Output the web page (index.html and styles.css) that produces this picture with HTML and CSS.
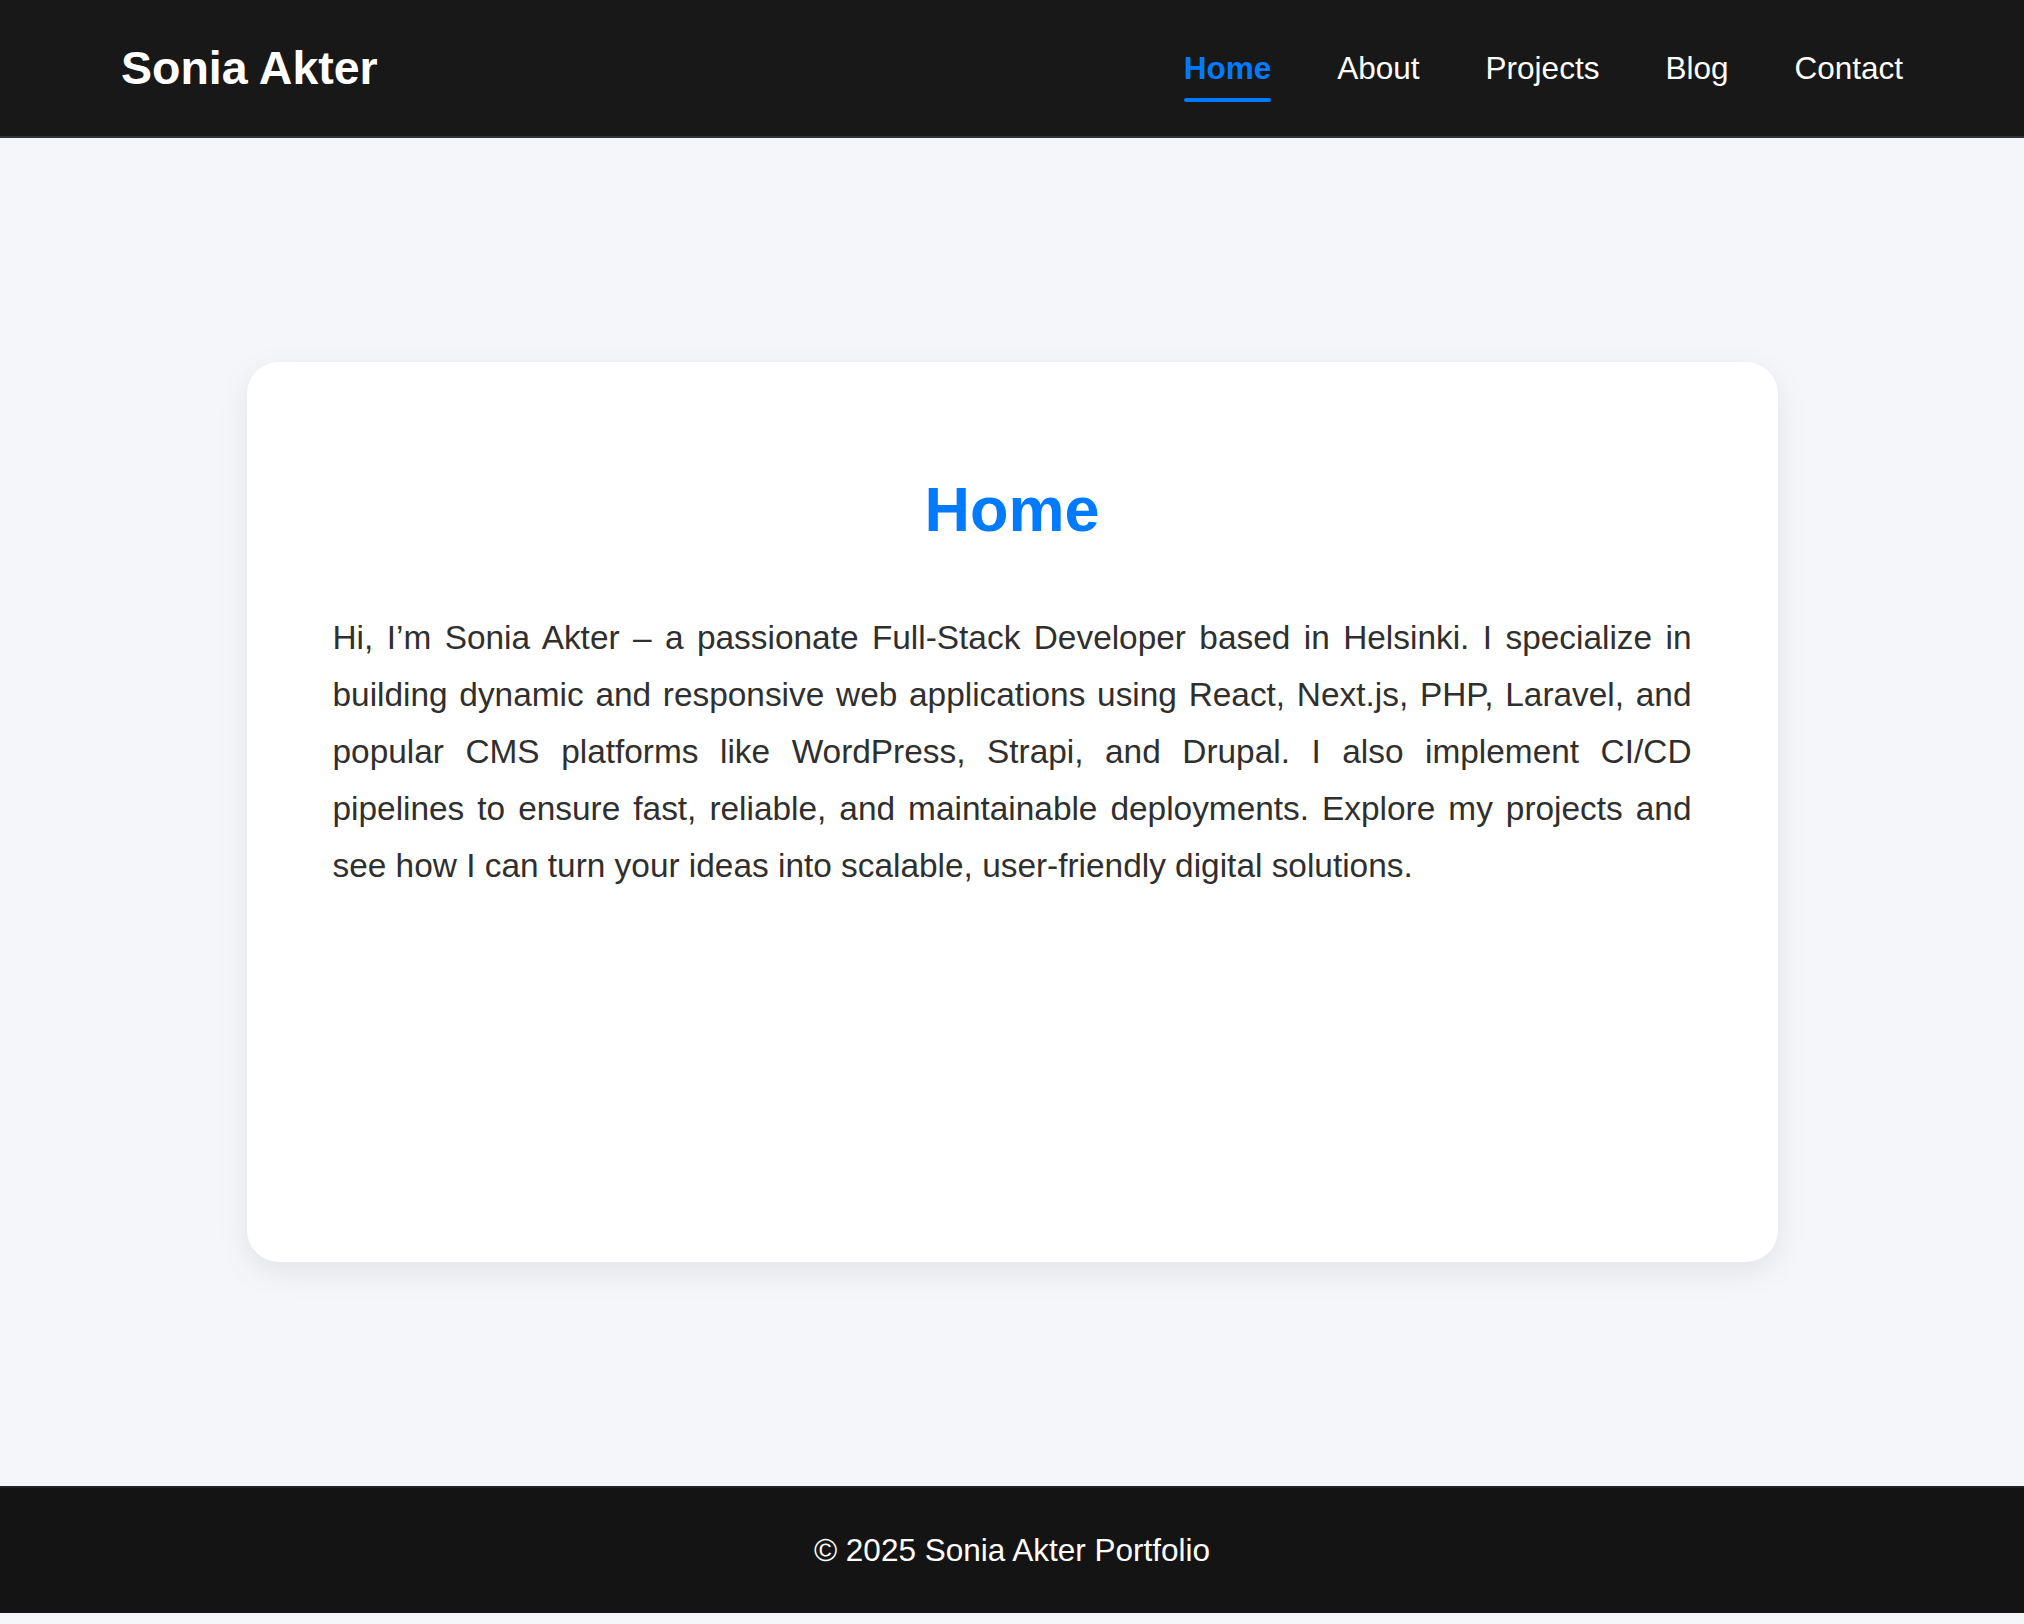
FILE: index.html
```html
<!DOCTYPE html>
<html lang="en">
<head>
<meta charset="utf-8">
<title>Sonia Akter Portfolio</title>
<link rel="stylesheet" href="styles.css">
</head>
<body>
<header class="site-header">
  <div class="logo">Sonia Akter</div>
  <nav class="nav">
    <a class="nav-link active" href="#">Home</a>
    <a class="nav-link" href="#">About</a>
    <a class="nav-link" href="#">Projects</a>
    <a class="nav-link" href="#">Blog</a>
    <a class="nav-link" href="#">Contact</a>
  </nav>
</header>
<main class="main">
  <section class="card">
    <h1 class="card-title">Home</h1>
    <p class="card-text">Hi, I’m Sonia Akter – a passionate Full-Stack Developer based in Helsinki. I specialize in building dynamic and responsive web applications using React, Next.js, PHP, Laravel, and popular CMS platforms like WordPress, Strapi, and Drupal. I also implement CI/CD pipelines to ensure fast, reliable, and maintainable deployments. Explore my projects and see how I can turn your ideas into scalable, user-friendly digital solutions.</p>
  </section>
</main>
<footer class="site-footer">
  <p class="footer-text">© 2025 Sonia Akter Portfolio</p>
</footer>
</body>
</html>
```

FILE: styles.css
```css
* { box-sizing: border-box; }

html, body {
  margin: 0;
  padding: 0;
}

body {
  background: #f5f6fa;
  font-family: "Liberation Sans", Arial, Helvetica, sans-serif;
  color: #333;
}

.site-header {
  height: 138px;
  background: #181818;
  border-bottom: 2px solid #333;
  display: flex;
  align-items: center;
  justify-content: space-between;
  padding: 0 121px;
}

.logo {
  color: #fff;
  font-weight: 700;
  font-size: 46.5px;
  line-height: normal;
}

.nav {
  display: flex;
  align-items: center;
  gap: 66px;
}

.nav-link {
  position: relative;
  color: #fff;
  text-decoration: none;
  font-size: 31.5px;
  line-height: normal;
}

.nav-link.active {
  color: #007bff;
  font-weight: 700;
}

.nav-link.active::after {
  content: "";
  position: absolute;
  left: 0;
  right: 0;
  bottom: -15px;
  height: 4px;
  border-radius: 2px;
  background: #007bff;
}

.main {
  padding: 224px 0;
}

.card {
  width: 1531px;
  min-height: 900px;
  margin: 0 auto;
  background: #fff;
  border-radius: 32px;
  box-shadow: 0 10px 32px rgba(0, 0, 0, 0.08);
  padding: 110px 86px 86px;
}

.card-title {
  margin: 0 0 61px;
  text-align: center;
  color: #007bff;
  font-size: 63px;
  font-weight: 700;
  line-height: 1.2;
}

.card-text {
  margin: 0;
  font-size: 33.4px;
  line-height: 1.713;
  text-align: justify;
  color: #2f2f2f;
}

.site-footer {
  background: #141414;
  border-top: 2px solid #222;
  height: 127px;
  display: flex;
  align-items: center;
  justify-content: center;
}

.footer-text {
  margin: 0;
  color: #fff;
  font-size: 31.5px;
}
```
